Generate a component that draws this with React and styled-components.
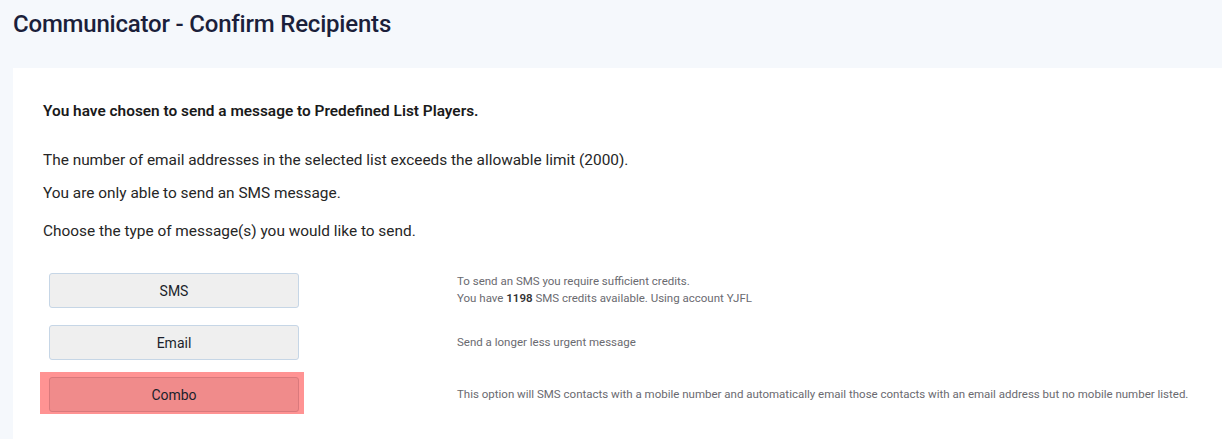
import React from "react";
import styled, { createGlobalStyle } from "styled-components";

const Global = createGlobalStyle`
  html, body { margin: 0; padding: 0; }
  body {
    background: #f5f8fc;
    font-family: Roboto, "Noto Sans", sans-serif;
    color: #1f2330;
  }
`;

const Page = styled.div`
  display: flex;
  flex-direction: column;
`;

const Header = styled.header`
  height: 68px;
  padding: 9px 13px 0;
  box-sizing: border-box;
`;

const Title = styled.h1`
  margin: 0;
  font-size: 24px;
  line-height: 30px;
  font-weight: 500;
  color: #1b1f3b;
  letter-spacing: -0.2px;
`;

const Panel = styled.section`
  margin-left: 13px;
  background: #ffffff;
  padding: 33px 0 20px 30px;
  min-height: 380px;
  box-sizing: border-box;
`;

const Lead = styled.p`
  margin: 0 0 29px;
  font-size: 15.4px;
  line-height: 20px;
  font-weight: 600;
  color: #1a1a1a;
`;

const Para = styled.p`
  margin: 0 0 ${(p) => p.$mb}px;
  font-size: 15.4px;
  line-height: 20px;
  color: #262626;
`;

const Options = styled.div`
  display: flex;
  flex-direction: column;
  gap: 10px;
  margin-top: 27px;
  margin-left: -3px;
`;

const Row = styled.div`
  display: grid;
  grid-template-columns: 264px 1fr;
  column-gap: 153px;
  align-items: center;
`;

const Cell = styled.div`
  padding: 5px 5px 2px 9px;
  background: ${(p) => (p.$active ? "#ff9393" : "transparent")};
`;

const Button = styled.button`
  display: block;
  width: 250px;
  height: 35px;
  box-sizing: border-box;
  border-radius: 3px;
  border: 1px solid ${(p) => (p.$active ? "#d9797c" : "#c6d6e6")};
  background: ${(p) => (p.$active ? "#f08b8b" : "#efefef")};
  font-family: inherit;
  font-size: 14px;
  color: #1b1f2b;
  cursor: pointer;
`;

const Desc = styled.div`
  font-size: 11.5px;
  line-height: 17px;
  color: #6a6a70;
  padding-top: 2px;
`;

const Strong = styled.b`
  color: #333;
  font-weight: 600;
`;

export default function App() {
  return (
    <Page>
      <Global />
      <Header>
        <Title>Communicator - Confirm Recipients</Title>
      </Header>
      <Panel>
        <Lead>You have chosen to send a message to Predefined List Players.</Lead>
        <Para $mb={13}>
          The number of email addresses in the selected list exceeds the allowable limit (2000).
        </Para>
        <Para $mb={18}>You are only able to send an SMS message.</Para>
        <Para $mb={0}>Choose the type of message(s) you would like to send.</Para>
        <Options>
          <Row>
            <Cell>
              <Button>SMS</Button>
            </Cell>
            <Desc>
              To send an SMS you require sufficient credits.
              <br />
              You have <Strong>1198</Strong> SMS credits available. Using account YJFL
            </Desc>
          </Row>
          <Row>
            <Cell>
              <Button>Email</Button>
            </Cell>
            <Desc>Send a longer less urgent message</Desc>
          </Row>
          <Row>
            <Cell $active>
              <Button $active>Combo</Button>
            </Cell>
            <Desc>
              This option will SMS contacts with a mobile number and automatically email those
              contacts with an email address but no mobile number listed.
            </Desc>
          </Row>
        </Options>
      </Panel>
    </Page>
  );
}
